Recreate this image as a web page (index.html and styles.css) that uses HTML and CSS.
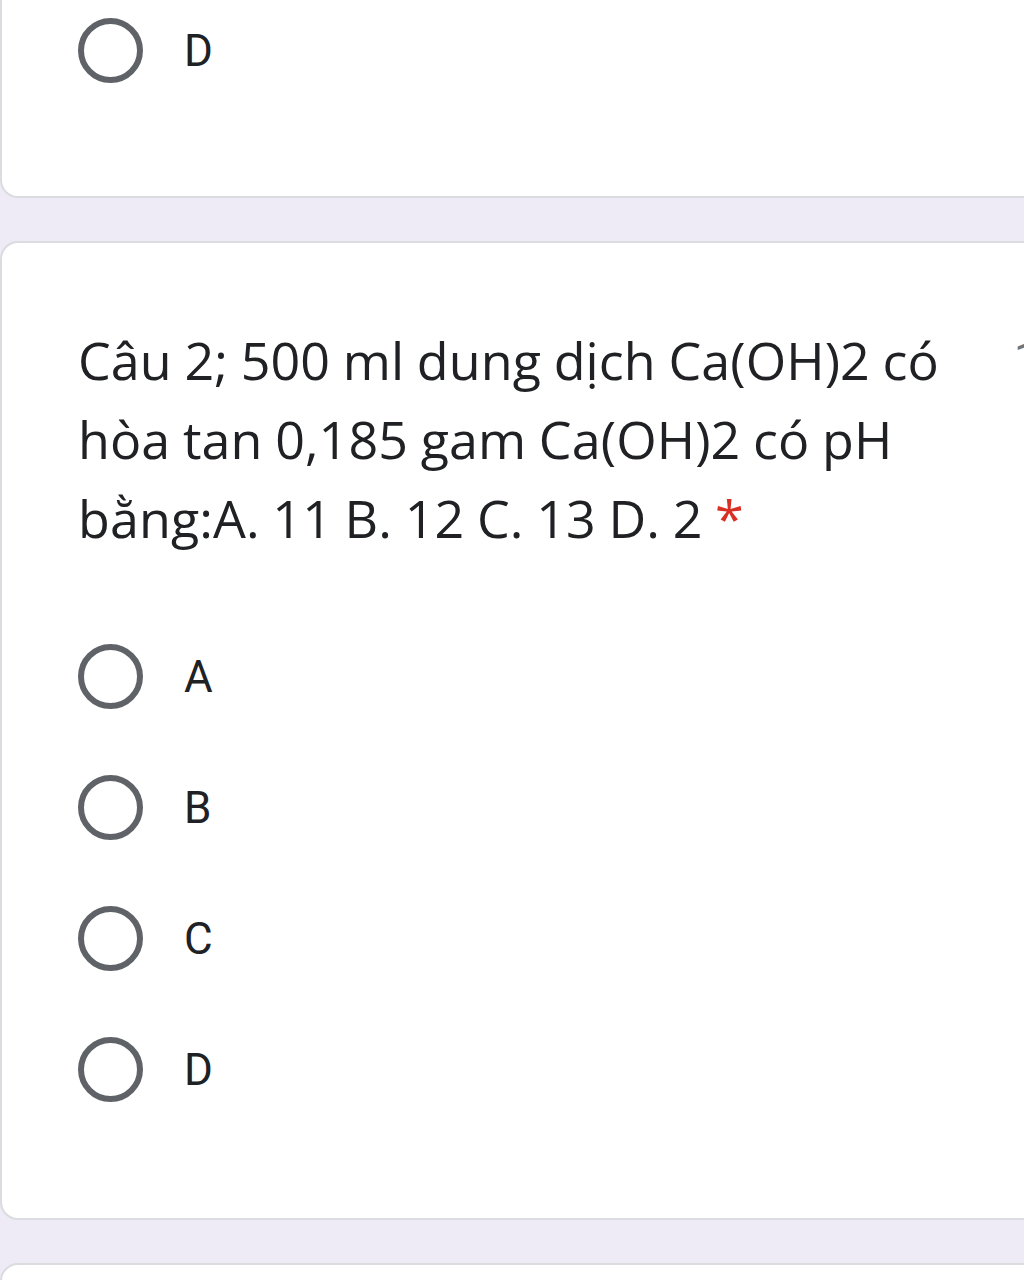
FILE: index.html
```html
<!DOCTYPE html>
<html lang="vi">
<head>
<meta charset="utf-8">
<title>Câu 2</title>
<link rel="stylesheet" href="styles.css">
</head>
<body>
<div class="page">
  <section class="card card-first">
    <div class="option"><span class="radio"></span><span class="label">D</span></div>
  </section>
  <section class="card card-question">
    <div class="question-head">
      <div class="question-text">Câu 2; 500 ml dung dịch Ca(OH)2 có hòa tan 0,185 gam Ca(OH)2 có pH bằng:A. 11 B. 12 C. 13 D. 2 <span class="required">*</span></div>
      <div class="points">1 điểm</div>
    </div>
    <div class="options">
      <div class="option"><span class="radio"></span><span class="label">A</span></div>
      <div class="option"><span class="radio"></span><span class="label">B</span></div>
      <div class="option"><span class="radio"></span><span class="label">C</span></div>
      <div class="option"><span class="radio"></span><span class="label">D</span></div>
    </div>
  </section>
  <section class="card card-next"></section>
</div>
</body>
</html>
```
FILE: styles.css
```css
html, body {
  margin: 0;
  padding: 0;
}
body {
  background: #eeebf7;
  width: 1024px;
  height: 1280px;
  overflow: hidden;
  font-family: "Open Sans", "Noto Sans", sans-serif;
  color: #202124;
}
.page {
  display: flex;
  flex-direction: column;
  gap: 43px;
  width: 1160px;
}
.card {
  background: #ffffff;
  border: 2px solid #dadce0;
  border-radius: 18px;
  padding-left: 76px;
}
.card-first {
  margin-top: -100px;
  padding-top: 83px;
  padding-bottom: 80px;
}
.card-question {
  padding-top: 77px;
  padding-bottom: 83px;
}
.card-next {
  height: 100px;
}
.question-head {
  display: flex;
  align-items: flex-start;
}
.question-text {
  flex: none;
  width: 936px;
  font-size: 52px;
  line-height: 79px;
  letter-spacing: 0.1px;
  word-spacing: -1px;
  color: #202124;
}
.required {
  color: #d93025;
}
.points {
  flex: none;
  font-family: "Roboto", sans-serif;
  font-size: 44px;
  line-height: 79px;
  color: #70757a;
  white-space: nowrap;
}
.options {
  margin-top: 54px;
  display: flex;
  flex-direction: column;
}
.option {
  display: flex;
  align-items: center;
  height: 131px;
}
.radio {
  box-sizing: border-box;
  width: 65px;
  height: 65px;
  border: 6px solid #5f6368;
  border-radius: 50%;
  flex: none;
}
.label {
  margin-left: 41px;
  font-family: "Roboto", sans-serif;
  font-size: 44px;
  color: #202124;
}
```
